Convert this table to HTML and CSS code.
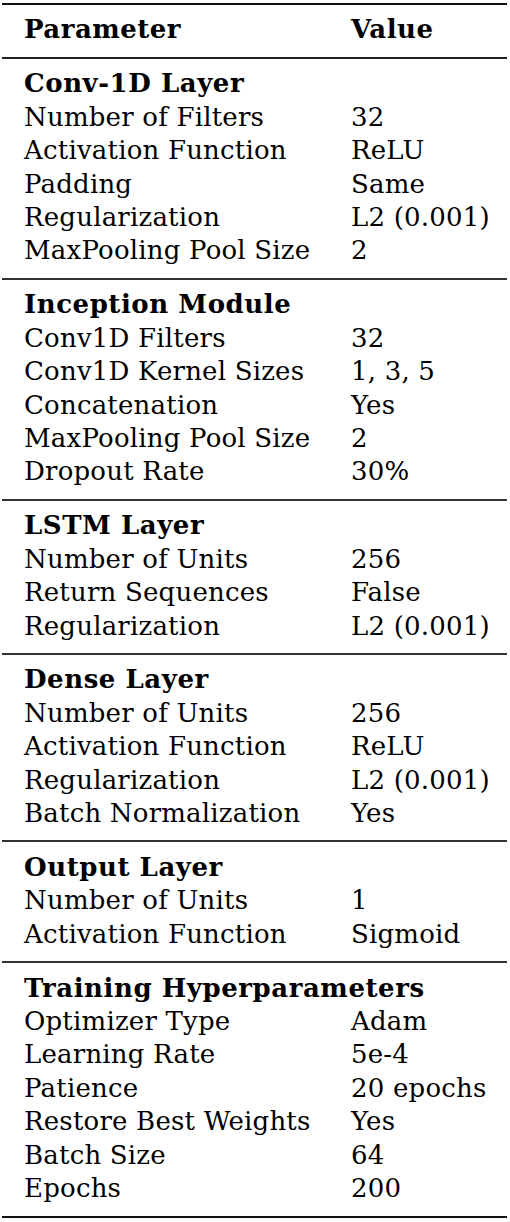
FILE: index.html
```html
<!DOCTYPE html>
<html lang="en">
<head>
    <meta charset="UTF-8">
    <meta name="viewport" content="width=device-width, initial-scale=1.0">
    <title>Model Hyperparameters</title>
    <link rel="stylesheet" href="styles.css">
</head>
<body>
    <div class="param-table">
        <div class="head row">
            <span class="name">Parameter</span>
            <span class="value">Value</span>
        </div>

        <div class="section">
            <div class="title">Conv-1D Layer</div>
            <div class="row"><span class="name">Number of Filters</span><span class="value">32</span></div>
            <div class="row"><span class="name">Activation Function</span><span class="value">ReLU</span></div>
            <div class="row"><span class="name">Padding</span><span class="value">Same</span></div>
            <div class="row"><span class="name">Regularization</span><span class="value">L2 (0.001)</span></div>
            <div class="row"><span class="name">MaxPooling Pool Size</span><span class="value">2</span></div>
        </div>

        <div class="section">
            <div class="title">Inception Module</div>
            <div class="row"><span class="name">Conv1D Filters</span><span class="value">32</span></div>
            <div class="row"><span class="name">Conv1D Kernel Sizes</span><span class="value">1, 3, 5</span></div>
            <div class="row"><span class="name">Concatenation</span><span class="value">Yes</span></div>
            <div class="row"><span class="name">MaxPooling Pool Size</span><span class="value">2</span></div>
            <div class="row"><span class="name">Dropout Rate</span><span class="value">30%</span></div>
        </div>

        <div class="section">
            <div class="title">LSTM Layer</div>
            <div class="row"><span class="name">Number of Units</span><span class="value">256</span></div>
            <div class="row"><span class="name">Return Sequences</span><span class="value">False</span></div>
            <div class="row"><span class="name">Regularization</span><span class="value">L2 (0.001)</span></div>
        </div>

        <div class="section">
            <div class="title">Dense Layer</div>
            <div class="row"><span class="name">Number of Units</span><span class="value">256</span></div>
            <div class="row"><span class="name">Activation Function</span><span class="value">ReLU</span></div>
            <div class="row"><span class="name">Regularization</span><span class="value">L2 (0.001)</span></div>
            <div class="row"><span class="name">Batch Normalization</span><span class="value">Yes</span></div>
        </div>

        <div class="section">
            <div class="title">Output Layer</div>
            <div class="row"><span class="name">Number of Units</span><span class="value">1</span></div>
            <div class="row"><span class="name">Activation Function</span><span class="value">Sigmoid</span></div>
        </div>

        <div class="section last">
            <div class="title">Training Hyperparameters</div>
            <div class="row"><span class="name">Optimizer Type</span><span class="value">Adam</span></div>
            <div class="row"><span class="name">Learning Rate</span><span class="value">5e-4</span></div>
            <div class="row"><span class="name">Patience</span><span class="value">20 epochs</span></div>
            <div class="row"><span class="name">Restore Best Weights</span><span class="value">Yes</span></div>
            <div class="row"><span class="name">Batch Size</span><span class="value">64</span></div>
            <div class="row"><span class="name">Epochs</span><span class="value">200</span></div>
        </div>
    </div>
</body>
</html>
```

FILE: styles.css
```css
body {
    margin: 0;
    background: #fff;
    color: #000;
    font-family: "DejaVu Serif", "Liberation Serif", serif;
    font-size: 26px;
}
.param-table {
    margin: 3px 0 0 2px;
    width: 505px;
    border-top: 2px solid #111;
    border-bottom: 2px solid #111;
}
.row {
    display: flex;
    line-height: 33.4px;
    letter-spacing: 0.2px;
    white-space: nowrap;
}
.name {
    width: 327px;
    padding-left: 22px;
    flex-shrink: 0;
}
.head {
    font-weight: bold;
    letter-spacing: 0.5px;
    padding: 7.5px 0 11px;
    border-bottom: 2px solid #222;
}
.section {
    padding: 8.5px 0 10px;
    border-bottom: 2px solid #333;
}
.section.last {
    border-bottom: none;
}
.title {
    font-weight: bold;
    letter-spacing: 0.55px;
    line-height: 33.4px;
    padding-left: 22px;
    white-space: nowrap;
}
```
